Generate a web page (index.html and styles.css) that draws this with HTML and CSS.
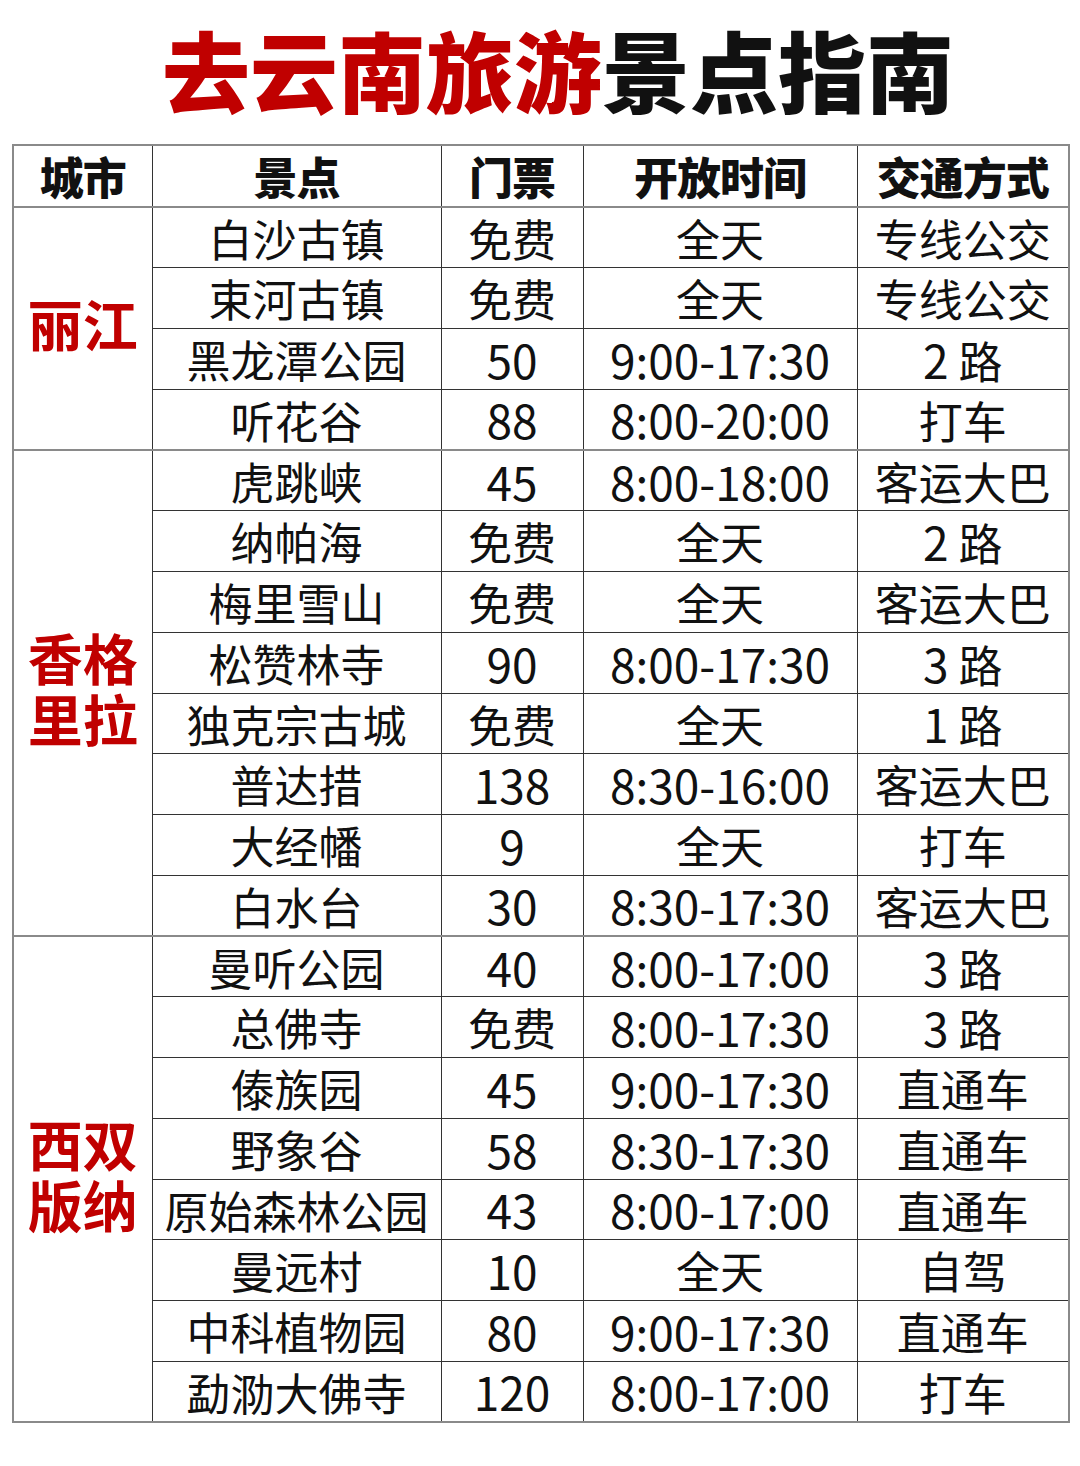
FILE: index.html
```html
<!DOCTYPE html>
<html lang="zh-CN">
<head>
<meta charset="utf-8">
<link rel="stylesheet" href="styles.css">
</head>
<body>
<h1 class="title"><span class="red">去云南旅游</span><span class="black">景点指南</span></h1>
<table class="guide">
<colgroup>
<col class="c1"><col class="c2"><col class="c3"><col class="c4"><col class="c5">
</colgroup>
<thead>
<tr><th>城市</th><th>景点</th><th>门票</th><th>开放时间</th><th>交通方式</th></tr>
</thead>
<tbody>
<tr><td class="city" rowspan="4"><span class="ln">丽江</span></td><td>白沙古镇</td><td>免费</td><td>全天</td><td>专线公交</td></tr>
<tr><td>束河古镇</td><td>免费</td><td>全天</td><td>专线公交</td></tr>
<tr><td>黑龙潭公园</td><td class="n">50</td><td class="n">9:00-17:30</td><td><span class="n">2</span> 路</td></tr>
<tr class="grp-end"><td>听花谷</td><td class="n">88</td><td class="n">8:00-20:00</td><td>打车</td></tr>
<tr><td class="city" rowspan="8"><span class="ln">香格</span><span class="ln">里拉</span></td><td>虎跳峡</td><td class="n">45</td><td class="n">8:00-18:00</td><td>客运大巴</td></tr>
<tr><td>纳帕海</td><td>免费</td><td>全天</td><td><span class="n">2</span> 路</td></tr>
<tr><td>梅里雪山</td><td>免费</td><td>全天</td><td>客运大巴</td></tr>
<tr><td>松赞林寺</td><td class="n">90</td><td class="n">8:00-17:30</td><td><span class="n">3</span> 路</td></tr>
<tr><td>独克宗古城</td><td>免费</td><td>全天</td><td><span class="n">1</span> 路</td></tr>
<tr><td>普达措</td><td class="n">138</td><td class="n">8:30-16:00</td><td>客运大巴</td></tr>
<tr><td>大经幡</td><td class="n">9</td><td>全天</td><td>打车</td></tr>
<tr class="grp-end"><td>白水台</td><td class="n">30</td><td class="n">8:30-17:30</td><td>客运大巴</td></tr>
<tr><td class="city" rowspan="8"><span class="ln">西双</span><span class="ln">版纳</span></td><td>曼听公园</td><td class="n">40</td><td class="n">8:00-17:00</td><td><span class="n">3</span> 路</td></tr>
<tr><td>总佛寺</td><td>免费</td><td class="n">8:00-17:30</td><td><span class="n">3</span> 路</td></tr>
<tr><td>傣族园</td><td class="n">45</td><td class="n">9:00-17:30</td><td>直通车</td></tr>
<tr><td>野象谷</td><td class="n">58</td><td class="n">8:30-17:30</td><td>直通车</td></tr>
<tr><td>原始森林公园</td><td class="n">43</td><td class="n">8:00-17:00</td><td>直通车</td></tr>
<tr><td>曼远村</td><td class="n">10</td><td>全天</td><td>自驾</td></tr>
<tr><td>中科植物园</td><td class="n">80</td><td class="n">9:00-17:30</td><td>直通车</td></tr>
<tr><td>勐泐大佛寺</td><td class="n">120</td><td class="n">8:00-17:00</td><td>打车</td></tr>
</tbody>
</table>
</body>
</html>
```

FILE: styles.css
```css
html, body {
  margin: 0;
  padding: 0;
  background: #ffffff;
}
body {
  width: 1080px;
  font-family: "Noto Sans CJK SC", "Noto Sans", sans-serif;
  color: #111;
}
.title {
  margin: 0;
  height: 144px;
  display: flex;
  align-items: center;
  justify-content: center;
  font-size: 88px;
  font-weight: 900;
  letter-spacing: 0;
  line-height: 1.1;
  padding: 0 0 8px 36px;
  box-sizing: border-box;
}
.title .red { color: #c00000; }
.title .black { color: #111; }

.guide {
  margin-left: 12px;
  width: 1056px;
  border-collapse: collapse;
  table-layout: fixed;
  border: 2px solid #8a8a8a;
}
.c1 { width: 139px; }
.c2 { width: 289px; }
.c3 { width: 142px; }
.c4 { width: 274px; }
.c5 { width: 212px; }

.guide thead tr { height: 62px; }
.guide tbody tr { height: 60.75px; }

.guide th, .guide td {
  border: 1px solid #333;
  text-align: center;
  vertical-align: middle;
  padding: 0;
  white-space: nowrap;
  line-height: 1.15;
}
.guide th {
  font-size: 44px;
  font-weight: 900;
  letter-spacing: -1px;
  border-bottom: 2px solid #8a8a8a;
  padding-top: 0;
}
.guide td {
  font-size: 44px;
  font-weight: 400;
  padding-top: 1px;
}
.guide .n {
  font-size: 46px;
}
.guide tr.grp-end td {
  border-bottom: 2px solid #8a8a8a;
}
.guide td.city {
  color: #c00000;
  font-size: 55px;
  font-weight: 700;
  border-bottom: 2px solid #8a8a8a;
  padding: 0 0 12px 0;
}
.guide td.city .ln {
  display: block;
  line-height: 61px;
}
```
